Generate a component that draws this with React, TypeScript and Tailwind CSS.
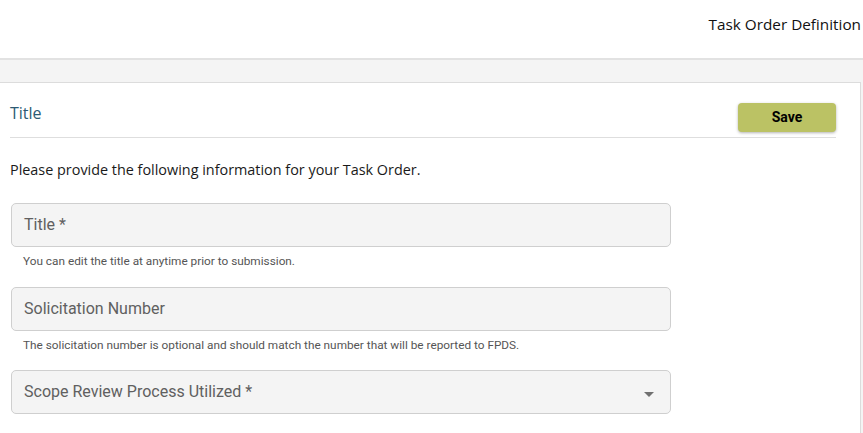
import React from 'react';

const sans = "font-['Open_Sans','Noto_Sans',sans-serif]";
const roboto = "font-['Roboto','Liberation_Sans',sans-serif]";

interface FieldProps {
  label: string;
  helper?: string;
  select?: boolean;
  className?: string;
}

const Field: React.FC<FieldProps> = ({ label, helper, select = false, className = "" }) => {
  return (
    <div className={className}>
      <div className="w-[660px] h-[44px] ml-px flex items-center justify-between pl-[12px] pr-[16px] bg-[#f4f4f4] border border-[#cfcfcf] rounded-[5px]">
        <span className={`${roboto} text-[16px] text-[#606060]`}>{label}</span>
        {select && (
          <svg width="10" height="5" viewBox="0 0 10 5" className="mt-[4px]">
            <path d="M0 0 L10 0 L5 5 Z" fill="#707070" />
          </svg>
        )}
      </div>
      {helper && (
        <p className={`${roboto} mt-[7px] pl-[13px] text-[11.8px] leading-[14px] text-[#555]`}>{helper}</p>
      )}
    </div>
  );
};

export default function App() {
  return (
    <div className="w-[863px] h-[433px] bg-[#f4f4f4] overflow-hidden flex flex-col">
      <header className="h-[60px] shrink-0 bg-white border-b-2 border-[#e2e2e2] flex justify-end pr-[2px] pt-[14px]">
        <h1 className={`${sans} text-[15.3px] leading-[20px] text-[#111]`}>Task Order Definition</h1>
      </header>
      <div className="h-[22px] shrink-0" />
      <main className="flex-1 mr-[2px] bg-white border-t border-r border-[#dcdcdc] pl-[10px]">
        <div className="w-[826px] flex items-start justify-between pt-[20px] pb-[5px] border-b border-[#dedede]">
          <h2 className={`${sans} text-[16px] leading-[20px] text-[#2c5a73]`}>Title</h2>
          <button className={`${roboto} w-[98px] h-[29px] rounded-[4px] bg-[#bbc264] text-[14px] font-bold text-black shadow-[0_1px_3px_rgba(0,0,0,0.3)]`}>
            Save
          </button>
        </div>
        <p className={`${sans} mt-[22px] text-[14.4px] leading-[20px] text-[#1a1a1a]`}>
          Please provide the following information for your Task Order.
        </p>
        <Field className="mt-[23px]" label="Title *" helper="You can edit the title at anytime prior to submission." />
        <Field
          className="mt-[19px]"
          label="Solicitation Number"
          helper="The solicitation number is optional and should match the number that will be reported to FPDS."
        />
        <Field className="mt-[18px]" label="Scope Review Process Utilized *" select />
      </main>
    </div>
  );
}
